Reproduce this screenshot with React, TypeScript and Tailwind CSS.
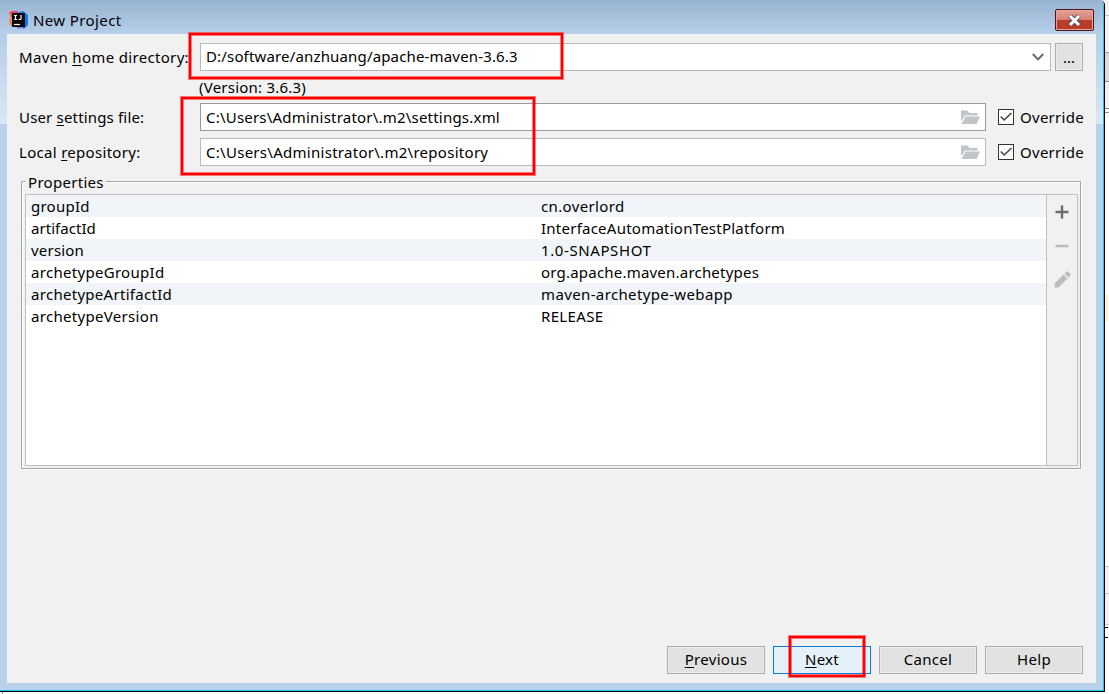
import React from 'react';

interface FieldRowProps {
  label: React.ReactNode;
  value: string;
  borderClass: string;
  valueClass: string;
}

const properties = [
  { name: 'groupId', nameClass: 'tracking-[0.25px]', value: 'cn.overlord', valueClass: 'tracking-[0.36px]' },
  { name: 'artifactId', nameClass: 'tracking-[0.05px]', value: 'InterfaceAutomationTestPlatform', valueClass: 'tracking-[0.24px]' },
  { name: 'version', nameClass: 'tracking-[0.2px]', value: '1.0-SNAPSHOT', valueClass: 'tracking-[0.6px]' },
  { name: 'archetypeGroupId', nameClass: 'tracking-[0.3px]', value: 'org.apache.maven.archetypes', valueClass: 'tracking-[0.21px]' },
  { name: 'archetypeArtifactId', nameClass: 'tracking-[0.29px]', value: 'maven-archetype-webapp', valueClass: 'tracking-[0.37px]' },
  { name: 'archetypeVersion', nameClass: 'tracking-[0.31px]', value: 'RELEASE', valueClass: 'tracking-[0.35px]' },
];

const Mnemonic: React.FC<{ children: React.ReactNode }> = ({ children }) => (
  <span className="underline decoration-1 underline-offset-2">{children}</span>
);

const IdeaLogo = () => (
  <svg width="20" height="20" viewBox="0 0 20 20">
    <path d="M0 2l3-1 4 3v4H2z" fill="#f9524b" />
    <path d="M0 9l3-2 2 4-1 6-3-2z" fill="#f5844c" />
    <path d="M3 1l5 0 4 3-8 3z" fill="#ee357f" />
    <path d="M10 2l4-1 5 4v10l-4 4-5-3z" fill="#087cfa" />
    <path d="M3 15l5-1 6 3-4 2z" fill="#8f7fdc" />
    <rect x="3" y="3" width="13" height="14" fill="#070707" />
    <path d="M5 5.500h3M6.500 5.500v4M5 9.500h3M12 5v3.500q0 1-1 1H9.500" fill="none" stroke="#fff" strokeWidth="1.2" />
    <path d="M5 14.500h6" stroke="#fff" strokeWidth="1.2" />
  </svg>
);

const FolderIcon = () => (
  <svg width="19" height="16" viewBox="0 0 19 16" fill="#c0c5c9">
    <path d="M0 1.500h6.500l2 2.500H16.500V6.500H4L0 12.500z" />
    <path d="M4.500 7.500H19l-3.300 7.500H0.500z" />
  </svg>
);

const FieldRow: React.FC<FieldRowProps> = ({ label, value, borderClass, valueClass }) => (
  <div className="flex h-7 items-center">
    <div className="w-[181px] shrink-0">{label}</div>
    <div className={`flex h-7 w-[786px] shrink-0 items-center justify-between border bg-white pr-[5px] pl-[5px] ${borderClass}`}>
      <span className={valueClass}>{value}</span>
      <FolderIcon />
    </div>
    <svg className="ml-3 shrink-0" width="16" height="16" viewBox="0 0 16 16">
      <rect x=".5" y=".5" width="15" height="15" fill="#fff" stroke="#333" />
      <path d="M2.700 7.500l3.500 3.500L13.400 4" fill="none" stroke="#444" strokeWidth="1.5" />
    </svg>
    <span className="ml-[6px] tracking-[0.27px]">Override</span>
  </div>
);

const DialogButton: React.FC<{ primary?: boolean; children: React.ReactNode }> = ({ primary, children }) => (
  <button
    className={`flex h-7 w-[98px] items-center justify-center border pb-[2px] tracking-[0.3px] ${
      primary ? 'border-[#0a7cd6] bg-[#e4f1fb]' : 'border-[#adadad] bg-[#e2e2e2] shadow-[inset_0_0_0_1px_#ececec]'
    }`}
  >
    <span>{children}</span>
  </button>
);

// Glass edge of the window, lighter towards the end of the reflection
const SideFrame = () => (
  <div className="flex w-[7px] shrink-0 flex-col bg-[#b9d1ea]">
    <div className="h-[90px] bg-linear-to-b from-[#b5cde8] to-[#dae8f5]" />
  </div>
);

const App: React.FC = () => {
  return (
    <div className="relative flex h-[694px] w-[1109px] flex-col overflow-hidden bg-white font-['Noto_Sans','Open_Sans',sans-serif] text-[15px] leading-[22px] whitespace-nowrap text-black">
      <div className="flex h-[692px] shrink-0">
        <div className="flex w-[1105px] shrink-0 flex-col rounded-tr-[5px] border-r border-b border-black">
          <div className="flex flex-1 flex-col overflow-hidden rounded-tr-[5px] border-r border-b border-[#1fc4e6] bg-[#b9d1ea] pb-[7px]">
            <div className="flex h-[34px] shrink-0 items-start justify-between bg-linear-to-b from-[#98b3d0] to-[#b7cfe9] pt-[9px] pr-[9px] pl-[9px]">
              <div className="flex items-center">
                <IdeaLogo />
                <span className="ml-[4px] tracking-[0.4px]">New Project</span>
              </div>
              <div className="flex h-[22px] w-[39px] items-center justify-center rounded-[2px] border border-[#4d1620] bg-linear-to-b from-[#e4a195] via-[#d58173] via-49% to-[#b83c27] to-51% shadow-[inset_0_0_0_1px_#e6a69b]">
                <svg width="15" height="13" viewBox="0 0 15 13">
                  <path d="M3 2l9 9M12 2l-9 9" stroke="#535666" strokeWidth="5" />
                  <path d="M3 2l9 9M12 2l-9 9" stroke="#fff" strokeWidth="3" />
                </svg>
              </div>
            </div>
            <div className="flex flex-1">
              <SideFrame />
              <div className="flex flex-1 flex-col bg-[#f1f1f1] pt-[9px] pl-3">
                <div className="flex h-7 items-center">
                  <div className="w-[181px] shrink-0 tracking-[0.33px]">Maven <Mnemonic>h</Mnemonic>ome directory:</div>
                  <div className="flex h-7 w-[851px] items-center justify-between border border-[#bababa] bg-white pr-[6px] pl-[5px]">
                    <span className="pb-[2px] tracking-[0.16px]">D:/software/anzhuang/apache-maven-3.6.3</span>
                    <svg width="12" height="8" viewBox="0 0 12 8">
                      <path d="M.8 1l5.200 5.300L11.200 1" fill="none" stroke="#666" strokeWidth="1.9" />
                    </svg>
                  </div>
                  <div className="ml-1 flex h-7 w-7 items-center justify-center border border-[#adadad] bg-[#e2e2e2] shadow-[inset_0_0_0_1px_#ececec]">...</div>
                </div>
                <div className="mt-[5px] mb-px ml-[180px] h-[22px] tracking-[0.22px]">(Version: 3.6.3)</div>
                <div className="mt-1 flex flex-col gap-[7px]">
                  <FieldRow
                    label={<span className="tracking-[0.17px]">User <Mnemonic>s</Mnemonic>ettings file:</span>}
                    value="C:\Users\Administrator\.m2\settings.xml"
                    borderClass="border-[#999]"
                    valueClass="tracking-[0.21px]"
                  />
                  <FieldRow
                    label={<span className="tracking-[0.3px]">Local <Mnemonic>r</Mnemonic>epository:</span>}
                    value="C:\Users\Administrator\.m2\repository"
                    borderClass="border-[#bababa]"
                    valueClass="tracking-[0.28px]"
                  />
                </div>

                <div className="relative mt-[15px] ml-[2px] h-[288px] w-[1060px] border border-[#a5a5a5] pt-[12px] pl-[3px] shadow-[1px_1px_0_#fff,inset_1px_1px_0_#fff]">
                  <span className="absolute -top-[11px] left-[4px] bg-[#f1f1f1] px-[2px] tracking-[0.3px]">Properties</span>
                  <div className="flex h-[272px] w-[1053px] border border-[#c0c0c0]">
                    <div className="w-[1021px] border-r border-[#c0c0c0] bg-white">
                      {properties.map((property) => (
                        <div key={property.name} className="flex h-[22px] items-center pl-[5px] odd:bg-[#f1f5fa]">
                          <span className={`w-[510px] ${property.nameClass}`}>{property.name}</span>
                          <span className={property.valueClass}>{property.value}</span>
                        </div>
                      ))}
                    </div>
                    <div className="flex flex-1 flex-col items-center pt-[10px]">
                      <svg width="18" height="86" viewBox="0 0 18 86">
                        <path d="M2.500 7h13M9 .5v13" stroke="#6e6e6e" strokeWidth="2.4" />
                        <path d="M2.500 41h13" stroke="#bdbdbd" strokeWidth="2.4" />
                        <path d="M1.500 78.500l9-9 4 4-9 9h-4zM11.500 68.500l2-2h1.500l2.500 2.500v1.500l-2 2z" fill="#bdbdbd" />
                      </svg>
                    </div>
                  </div>
                </div>

                <div className="mt-auto mb-[9px] ml-[648px] flex gap-2">
                  <DialogButton><Mnemonic>P</Mnemonic>revious</DialogButton>
                  <DialogButton primary><Mnemonic>N</Mnemonic>ext</DialogButton>
                  <DialogButton>Cancel</DialogButton>
                  <DialogButton>Help</DialogButton>
                </div>
              </div>
              <SideFrame />
            </div>
          </div>
        </div>

        {/* Sliver of the window behind the dialog */}
        <div className="flex w-1 shrink-0 flex-col">
          <div className="h-4 border-b border-[#c4c4c4] bg-[#f2f2f2]" />
          <div className="h-[37px] border-b border-[#a0a0a0] bg-[#f2f0f2]" />
          <div className="h-[29px] border-b border-[#909090] bg-[#dcdadc]" />
          <div className="h-[27px] border-b border-[#808080] bg-[#f2f0f2]" />
          <div className="h-1 border-b border-[#909090] bg-white" />
          <div className="mt-[182px] h-[26px] bg-[#fdf6dc]" />
          <div className="mt-[245px] h-7 border-y border-[#c8c4c8] bg-[#f4f0f4]" />
          <div className="h-[31px] border-b border-[#c8c4c8] bg-[#f4f0f4]" />
          <div className="mt-[2px] h-[11px] w-[3px] border-t border-b border-black" />
        </div>
      </div>
      <div className="ml-[2px] h-[2px] w-px bg-[#888]" />

      {/* Highlight frames */}
      <div className="absolute top-[33px] left-[189px] h-[46px] w-[374px] border-2 border-[#fe0000] shadow-[0_0_0_1px_#fe000080,inset_0_0_0_1px_#fe000080]" />
      <div className="absolute top-[97px] left-[181px] h-[78px] w-[354px] border-2 border-[#fe0000] shadow-[0_0_0_1px_#fe000080,inset_0_0_0_1px_#fe000080]" />
      <div className="absolute top-[636px] left-[789px] h-[41px] w-[76px] border-2 border-[#fe0000] shadow-[0_0_0_1px_#fe000080,inset_0_0_0_1px_#fe000080]" />
    </div>
  );
};

export default App;
